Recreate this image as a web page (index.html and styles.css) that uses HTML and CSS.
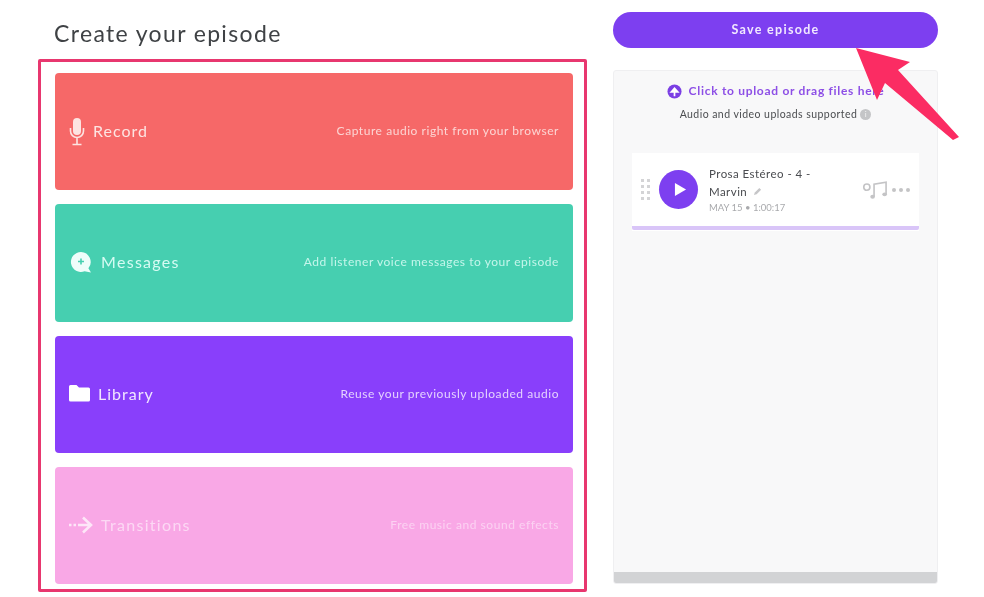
FILE: index.html
```html
<!DOCTYPE html>
<html lang="en">
<head>
<meta charset="utf-8">
<title>Create your episode</title>
<link rel="stylesheet" href="styles.css">
</head>
<body>
<main class="page">
  <section class="left">
    <h1 class="title">Create your episode</h1>
    <div class="frame">
      <div class="card record">
        <div class="card-label">
          <svg class="icon icon-mic" viewBox="0 0 16 30" aria-hidden="true"><rect x="4" y="1" width="8" height="17" rx="4" fill="currentColor"/><path d="M1.500 11v3a6.500 6.500 0 0 0 13 0v-3M8 20.500V27M3.500 27.500h9" fill="none" stroke="currentColor" stroke-width="1.600"/></svg>
          <span>Record</span>
        </div>
        <span class="card-desc">Capture audio right from your browser</span>
      </div>
      <div class="card messages">
        <div class="card-label">
          <svg class="icon icon-msg" viewBox="0 0 24 22" aria-hidden="true"><path d="M12 1a10 10 0 1 0 3.600 19.300L22 21.500l-2.600-4.200A10 10 0 0 0 12 1Z" fill="currentColor"/><path d="M12 7.500v6M9 10.500h6" stroke="#46cfb0" stroke-width="1.600"/></svg>
          <span>Messages</span>
        </div>
        <span class="card-desc">Add listener voice messages to your episode</span>
      </div>
      <div class="card library">
        <div class="card-label">
          <svg class="icon icon-folder" viewBox="0 0 21 18" aria-hidden="true"><path d="M1.500 1h6l2.500 2.500h9.500a1.500 1.500 0 0 1 1.500 1.500v11a1.500 1.500 0 0 1-1.500 1.500h-18A1.500 1.500 0 0 1 0 16V2.500A1.500 1.500 0 0 1 1.500 1Z" fill="currentColor"/></svg>
          <span>Library</span>
        </div>
        <span class="card-desc">Reuse your previously uploaded audio</span>
      </div>
      <div class="card transitions">
        <div class="card-label">
          <svg class="icon icon-arrow" viewBox="0 0 24 18" aria-hidden="true"><path d="M0 9h2.500M4.500 9h2.500M9 9h13M14 1.500 22 9l-8 7.500" fill="none" stroke="currentColor" stroke-width="2.600"/></svg>
          <span>Transitions</span>
        </div>
        <span class="card-desc">Free music and sound effects</span>
      </div>
    </div>
  </section>

  <aside class="right">
    <button class="save" type="button">Save episode</button>
    <div class="panel">
      <div class="panel-body">
        <div class="upload">
          <svg class="upload-icon" viewBox="0 0 16 16" aria-hidden="true"><circle cx="8" cy="8" r="7.500" fill="#7b3fe4"/><path d="M8 13V8M4.500 8.500 8 4.500l3.500 4Z" fill="#fff" stroke="#fff" stroke-width="1.800"/></svg>
          <span>Click to upload or drag files here</span>
        </div>
        <div class="support">
          <span>Audio and video uploads supported</span>
          <span class="info">i</span>
        </div>
        <div class="item">
          <div class="item-row">
            <div class="grip"><i></i><i></i><i></i><i></i><i></i><i></i><i></i><i></i></div>
            <div class="play"><svg viewBox="0 0 14 16" aria-hidden="true"><path d="M1 1l12 7-12 7Z" fill="#fff"/></svg></div>
            <div class="meta">
              <div class="name">Prosa Estéreo - 4 - Marvin <svg class="pencil" viewBox="0 0 10 10" aria-hidden="true"><path d="M1 9l1-3 5-5 2 2-5 5Z" fill="#c6c6c8"/></svg></div>
              <div class="date">MAY 15 • 1:00:17</div>
            </div>
            <svg class="music" viewBox="0 0 26 20" aria-hidden="true"><circle cx="4" cy="7" r="3.200" fill="none" stroke="#c4c4c6" stroke-width="1.700"/><path d="M11.500 17V4L24 2v12.500" fill="none" stroke="#c4c4c6" stroke-width="1.700"/><ellipse cx="10" cy="17" rx="2.400" ry="2" fill="#c4c4c6"/><ellipse cx="22.500" cy="14.500" rx="2.400" ry="2" fill="#c4c4c6"/></svg>
            <div class="dots"><i></i><i></i><i></i></div>
          </div>
          <div class="progress"></div>
        </div>
      </div>
      <div class="panel-foot"></div>
    </div>
  </aside>
</main>
<svg class="pointer" viewBox="0 0 110 100" aria-hidden="true"><path d="M2 2 56 16 44 24 105 91 99 94 31 37 23 54Z" fill="#fb2c63"/></svg>
</body>
</html>
```
FILE: styles.css
```css
* { box-sizing: border-box; }
html, body { margin: 0; height: 100%; }
body {
  width: 984px;
  height: 597px;
  overflow: hidden;
  background: #fff;
  font-family: "Lato", "Liberation Sans", sans-serif;
  position: relative;
  filter: blur(0.45px);
}
.page {
  display: flex;
  gap: 26px;
  padding: 12px 0 0 38px;
}
.left { width: 549px; }
.title {
  margin: 7px 0 12px 16px;
  font-size: 23px;
  line-height: 28px;
  font-weight: 400;
  letter-spacing: 1.35px;
  color: #3f4245;
}
.frame {
  height: 533px;
  border: 3px solid #e8376f;
  border-radius: 2px;
  padding: 11px 11px 5px 14px;
  display: flex;
  flex-direction: column;
  gap: 14px;
}
.card {
  flex: 1;
  border-radius: 4px;
  padding: 0 14px 2px 14px;
  display: flex;
  align-items: center;
  justify-content: space-between;
  color: #fff;
}
.card-label {
  display: flex;
  align-items: center;
  gap: 8px;
  font-size: 16px;
  letter-spacing: 1px;
}
.messages .card-label,
.transitions .card-label { letter-spacing: 1.3px; }
.card-desc {
  font-size: 12px;
  letter-spacing: 0.55px;
  opacity: 0.88;
}
.record { background: #f66868; color: #fde4e2; }
.messages { background: #46cfb0; color: #d6fbf3; }
.library { background: #893ffb; color: #f1e6ff; }
.transitions { background: #f9a8e6; color: #fcd8f4; }
.icon { display: block; flex: none; }
.icon-mic { width: 16px; height: 30px; margin-top: 2px; }
.icon-msg { width: 24px; height: 22px; color: #eefdfa; }
.icon-folder { width: 21px; height: 18px; color: #fff; }
.icon-arrow { width: 24px; height: 18px; margin-top: 1px; color: #fde6f8; }
.right { width: 325px; }
.save {
  display: block;
  width: 100%;
  height: 36px;
  border: 0;
  border-radius: 18px;
  background: #7d3ff0;
  color: #f1e8ff;
  font: 700 12.500px "Lato", "Liberation Sans", sans-serif;
  letter-spacing: 1.3px;
  padding: 0 0 1px;
}
.panel {
  margin-top: 22px;
  height: 514px;
  display: flex;
  flex-direction: column;
  background: #f8f8f9;
  border: 1px solid #efeff1;
  border-radius: 3px;
  overflow: hidden;
}
.panel-body { flex: 1; padding-top: 12px; }
.panel-foot { height: 11px; background: #d2d3d5; }
.upload {
  display: flex;
  justify-content: center;
  align-items: center;
  gap: 7px;
  color: #8d4fe6;
  font-size: 12px;
  font-weight: 700;
  letter-spacing: 0.7px;
  line-height: 16px;
}
.upload-icon { width: 15px; height: 15px; }
.support {
  margin-top: 8px;
  display: flex;
  justify-content: center;
  align-items: center;
  gap: 3px;
  font-size: 10.500px;
  letter-spacing: 0.45px;
  line-height: 14px;
  color: #4b4d50;
}
.info {
  width: 11px;
  height: 11px;
  border-radius: 50%;
  background: #c4c5c7;
  color: #f4f4f4;
  font-size: 8px;
  line-height: 11px;
  text-align: center;
}
.item {
  margin: 32px 18px 0;
  height: 78px;
  background: #fff;
  display: flex;
  flex-direction: column;
}
.item-row {
  flex: 1;
  display: flex;
  align-items: center;
  padding: 0 8px 0 9px;
}
.grip {
  width: 9px;
  display: grid;
  grid-template-columns: 3px 3px;
  gap: 3px;
  flex: none;
}
.grip i { height: 3px; background: #d4d4d6; }
.play {
  margin-left: 9px;
  width: 39px;
  height: 39px;
  flex: none;
  border-radius: 50%;
  background: #7d3ff0;
  display: flex;
  align-items: center;
  justify-content: center;
}
.play svg { width: 13px; height: 15px; margin-left: 3px; }
.meta { margin-left: 11px; width: 122px; flex: none; padding-top: 1px; }
.name {
  font-size: 11.500px;
  line-height: 18px;
  letter-spacing: 0.45px;
  color: #4a4c50;
}
.pencil { width: 9px; height: 9px; margin-left: 2px; }
.date {
  font-size: 9.500px;
  line-height: 14px;
  letter-spacing: 0;
  color: #a9aaad;
}
.music { margin-left: 32px; width: 25px; height: 20px; flex: none; }
.dots { margin-left: 4px; display: flex; gap: 3px; }
.dots i { width: 4px; height: 4px; border-radius: 50%; background: #c4c4c6; }
.progress { height: 4px; background: #d9c5f8; border-radius: 0 0 2px 2px; margin-bottom: 1px; }
.pointer {
  position: absolute;
  left: 854px;
  top: 46px;
  width: 110px;
  height: 100px;
}
```
